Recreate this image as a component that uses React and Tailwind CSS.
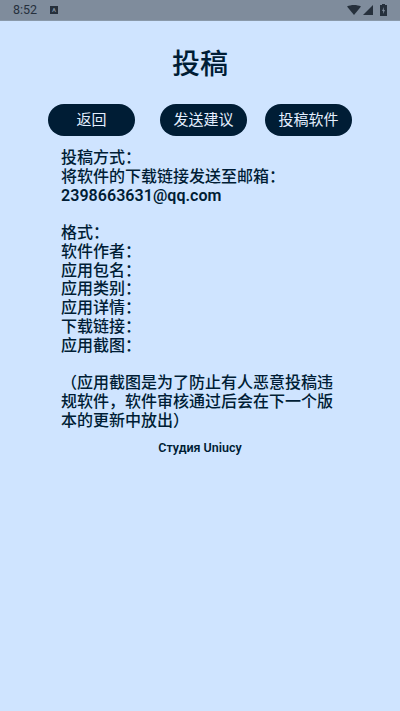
const font = { fontFamily: '"Roboto", "Noto Sans CJK SC", sans-serif' };

const StatusBar = () => (
  <div className="h-[21px] bg-[#7f8c9c] flex items-center justify-between pl-[13px] pr-[13px] border-b border-[#8a99aa]">
    <div className="flex items-center gap-[13px]">
      <span className="text-[12.5px] leading-none text-[#26303c]">8:52</span>
      <span className="w-[8px] h-[8px] bg-[#26303c] flex items-center justify-center text-[6px] leading-none font-bold text-[#7f8c9c]">
        A
      </span>
    </div>
    <div className="flex items-center">
      <svg width="14" height="10" viewBox="0 0 14 10">
        <path d="M0 1.5C2 .5 4.5 0 7 0s5 .5 7 1.5L7 10z" fill="#26303c" />
      </svg>
      <svg width="10" height="10" viewBox="0 0 10 10" className="ml-[2px] mr-[7px]">
        <path d="M10 0v10H0z" fill="#26303c" />
      </svg>
      <svg width="7" height="12" viewBox="0 0 7 12">
        <path d="M2 0h3v1h2v11H0V1h2z" fill="#26303c" />
        <path d="M4 3 2 7h1.2L3 10l2-4H3.8z" fill="#7f8c9c" />
      </svg>
    </div>
  </div>
);

const Btn = ({ children, className }) => (
  <button className={"w-[87px] h-[32px] rounded-[16px] bg-[#001d35] text-[#e4efff] text-[15px] leading-none flex items-center justify-center " + className}>
    {children}
  </button>
);

const App = () => {
  return (
    <div className="w-[400px] h-[711px] bg-[#cfe4ff] text-[#001d35] overflow-hidden" style={font}>
      <StatusBar />
      <h1 className="mt-[25px] h-[37px] text-[28px] leading-[37px] font-medium text-center">投稿</h1>

      <div className="mt-[21px] flex pl-[48px]">
        <Btn>返回</Btn>
        <Btn className="ml-[25px]">发送建议</Btn>
        <Btn className="ml-[18px]">投稿软件</Btn>
      </div>

      <div className="mt-[13px] ml-[61px] w-[276px] text-[16px] leading-[18.75px] font-medium">
        <p>投稿方式：</p>
        <p>将软件的下载链接发送至邮箱：</p>
        <p className="font-semibold tracking-[0.05px]">2398663631@qq.com</p>
        <p className="mt-[18.75px]">格式：</p>
        <p>软件作者：</p>
        <p>应用包名：</p>
        <p>应用类别：</p>
        <p>应用详情：</p>
        <p>下载链接：</p>
        <p>应用截图：</p>
        <p className="mt-[18.75px]">（应用截图是为了防止有人恶意投稿违规软件，软件审核通过后会在下一个版本的更新中放出）</p>
      </div>

      <p className="mt-[11px] text-[12.5px] leading-[14px] font-semibold text-center">Студия Uniucy</p>
    </div>
  );
};

export default App;
